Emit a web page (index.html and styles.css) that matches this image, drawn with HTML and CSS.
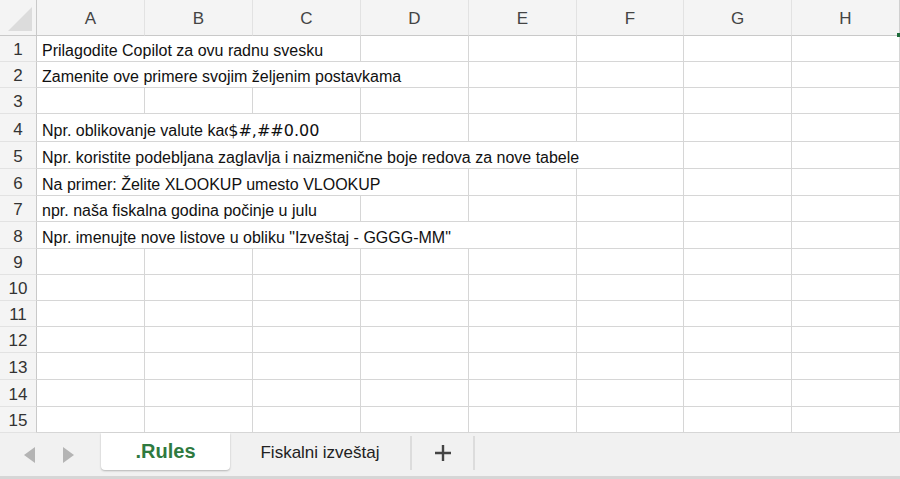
FILE: index.html
```html
<!DOCTYPE html>
<html lang="sr">
<head>
  <meta charset="UTF-8">
  <title>Radna sveska</title>
  <link rel="stylesheet" href="styles.css">
</head>
<body>
  <div class="workbook">
    <div class="sheet">
      <div class="corner"><div class="corner-tri"></div></div>
      <div class="col-head">A</div>
      <div class="col-head">B</div>
      <div class="col-head">C</div>
      <div class="col-head">D</div>
      <div class="col-head">E</div>
      <div class="col-head">F</div>
      <div class="col-head">G</div>
      <div class="col-head last">H<span class="sel-mark"></span></div>

      <div class="row-head">1</div>
      <div class="cell span3">Prilagodite Copilot za ovu radnu svesku</div>
      <div class="cell"></div><div class="cell"></div><div class="cell"></div><div class="cell"></div><div class="cell"></div>

      <div class="row-head">2</div>
      <div class="cell span4">Zamenite ove primere svojim željenim postavkama</div>
      <div class="cell"></div><div class="cell"></div><div class="cell"></div><div class="cell"></div>

      <div class="row-head">3</div>
      <div class="cell"></div><div class="cell"></div><div class="cell"></div><div class="cell"></div><div class="cell"></div><div class="cell"></div><div class="cell"></div><div class="cell"></div>

      <div class="row-head">4</div>
      <div class="cell span3">Npr. oblikovanje valute kao<span class="fmt">$#,##0.00</span></div>
      <div class="cell"></div><div class="cell"></div><div class="cell"></div><div class="cell"></div><div class="cell"></div>

      <div class="row-head">5</div>
      <div class="cell span6">Npr. koristite podebljana zaglavlja i naizmenične boje redova za nove tabele</div>
      <div class="cell"></div><div class="cell"></div>

      <div class="row-head">6</div>
      <div class="cell span4">Na primer: Želite XLOOKUP umesto VLOOKUP</div>
      <div class="cell"></div><div class="cell"></div><div class="cell"></div><div class="cell"></div>

      <div class="row-head">7</div>
      <div class="cell span3">npr. naša fiskalna godina počinje u julu</div>
      <div class="cell"></div><div class="cell"></div><div class="cell"></div><div class="cell"></div><div class="cell"></div>

      <div class="row-head">8</div>
      <div class="cell span5">Npr. imenujte nove listove u obliku "Izveštaj - GGGG-MM"</div>
      <div class="cell"></div><div class="cell"></div><div class="cell"></div>

      <div class="row-head">9</div>
      <div class="cell"></div><div class="cell"></div><div class="cell"></div><div class="cell"></div><div class="cell"></div><div class="cell"></div><div class="cell"></div><div class="cell"></div>
      <div class="row-head">10</div>
      <div class="cell"></div><div class="cell"></div><div class="cell"></div><div class="cell"></div><div class="cell"></div><div class="cell"></div><div class="cell"></div><div class="cell"></div>
      <div class="row-head">11</div>
      <div class="cell"></div><div class="cell"></div><div class="cell"></div><div class="cell"></div><div class="cell"></div><div class="cell"></div><div class="cell"></div><div class="cell"></div>
      <div class="row-head">12</div>
      <div class="cell"></div><div class="cell"></div><div class="cell"></div><div class="cell"></div><div class="cell"></div><div class="cell"></div><div class="cell"></div><div class="cell"></div>
      <div class="row-head">13</div>
      <div class="cell"></div><div class="cell"></div><div class="cell"></div><div class="cell"></div><div class="cell"></div><div class="cell"></div><div class="cell"></div><div class="cell"></div>
      <div class="row-head">14</div>
      <div class="cell"></div><div class="cell"></div><div class="cell"></div><div class="cell"></div><div class="cell"></div><div class="cell"></div><div class="cell"></div><div class="cell"></div>
      <div class="row-head">15</div>
      <div class="cell"></div><div class="cell"></div><div class="cell"></div><div class="cell"></div><div class="cell"></div><div class="cell"></div><div class="cell"></div><div class="cell"></div>
    </div>

    <div class="tabbar">
      <div class="nav">
        <svg width="12" height="16" viewBox="0 0 12 16"><polygon points="11,0 11,16 0,8" fill="#b4b4b4"/></svg>
        <svg width="12" height="16" viewBox="0 0 12 16"><polygon points="1,0 1,16 12,8" fill="#b4b4b4"/></svg>
      </div>
      <div class="tab active">.Rules</div>
      <div class="tab">Fiskalni izveštaj</div>
      <div class="tab add">
        <svg width="18" height="18" viewBox="0 0 18 18"><path d="M9 1v16M1 9h16" stroke="#444" stroke-width="2.4"/></svg>
      </div>
    </div>
  </div>
</body>
</html>
```

FILE: styles.css
```css
body {
  margin: 0;
  font-family: "Liberation Sans", Arial, sans-serif;
  background: #fff;
  overflow: hidden;
}
.workbook {
  width: 900px;
  height: 479px;
  display: flex;
  flex-direction: column;
}
.sheet {
  display: grid;
  grid-template-columns: 37px 108px 108px 108px 108px 108px 107px 108px 108px;
  grid-template-rows: 36px 26px 26px 26px 28px 27px 27px 26px 27px 26px 26px 26px 26px 27px 27px 26px;
}
.corner {
  background: #f4f4f4;
  border-right: 1px solid #c9c9c9;
  border-bottom: 1px solid #c9c9c9;
  position: relative;
}
.corner-tri {
  position: absolute;
  right: 4px;
  bottom: 4px;
  width: 0;
  height: 0;
  border-left: 24px solid transparent;
  border-bottom: 24px solid #dcdcdc;
}
.col-head {
  background: #f4f4f4;
  border-right: 1px solid #e2e2e2;
  border-bottom: 1px solid #c9c9c9;
  color: #444;
  font-size: 17px;
  display: flex;
  align-items: center;
  justify-content: center;
  padding-top: 2px;
  box-sizing: border-box;
  position: relative;
}
.col-head.last {
  border-right: 1px solid #d0d0d0;
}
.sel-mark {
  position: absolute;
  right: -1px;
  bottom: -2px;
  width: 3px;
  height: 4px;
  background: #1e6b3a;
}
.row-head {
  background: #f4f4f4;
  border-right: 1px solid #c9c9c9;
  border-bottom: 1px solid #e2e2e2;
  color: #333;
  font-size: 17px;
  display: flex;
  align-items: flex-end;
  justify-content: center;
  padding-bottom: 1px;
  box-sizing: border-box;
}
.cell {
  border-right: 1px solid #d6d6d6;
  border-bottom: 1px solid #d6d6d6;
  box-sizing: border-box;
  font-size: 16px;
  color: #111;
  padding: 0 0 1px 5px;
  display: flex;
  align-items: flex-end;
  white-space: nowrap;
  overflow: hidden;
}
.span3 { grid-column: span 3; }
.span4 { grid-column: span 4; }
.span5 { grid-column: span 5; }
.span6 { grid-column: span 6; }
.fmt {
  font-family: "DejaVu Sans", sans-serif;
  font-size: 16px;
  background: #fff;
  margin-left: -5px;
  padding: 0 1px 1px 0;
  margin-bottom: -1px;
  position: relative;
}
.tabbar {
  flex: 1;
  background: #f1f1f1;
  border-bottom: 3px solid #d6d6d6;
  display: flex;
  align-items: stretch;
  box-sizing: border-box;
}
.nav {
  width: 101px;
  display: flex;
  align-items: center;
  gap: 26px;
  padding-left: 24px;
  box-sizing: border-box;
}
.tab {
  display: flex;
  align-items: center;
  justify-content: center;
  font-size: 17px;
  color: #222;
  width: 182px;
  margin: 3px 0 6px;
  border-right: 2px solid #dcdcdc;
  box-sizing: border-box;
}
.tab.active {
  width: 129px;
  margin: 0 0 6px;
  background: #fff;
  border-right: none;
  border-radius: 0 0 4px 4px;
  box-shadow: 0 1px 2px rgba(0, 0, 0, 0.25);
  color: #2f7a3f;
  font-weight: bold;
  font-size: 20px;
}
.tab.add {
  width: 63px;
}
```
